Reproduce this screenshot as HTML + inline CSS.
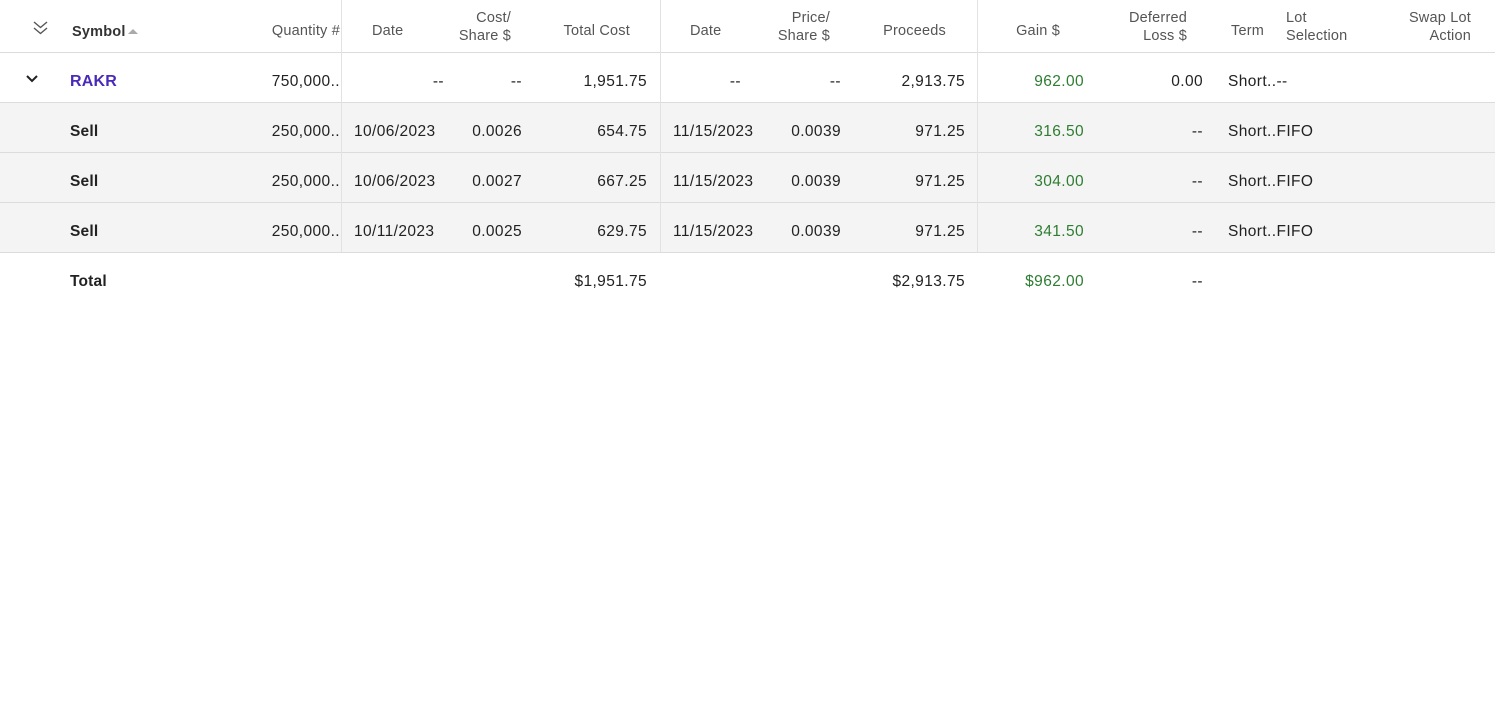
<!DOCTYPE html>
<html><head><style>
body{margin:0;width:1510px;height:720px;background:#fff;font-family:"Liberation Sans",Arial,sans-serif;position:relative;overflow:hidden}
.t{position:absolute;font-size:15.5px;line-height:18px;white-space:nowrap;color:#222;margin-top:2px;letter-spacing:0.4px}
.r{text-align:right}
.h{color:#555;font-size:14.5px;letter-spacing:0.2px;margin-top:1px}
.b{font-weight:bold;letter-spacing:0.2px}
.g{color:#2e7d32}
.line{position:absolute;left:0;width:1495px;height:1px;background:#dcdcdc}
.v{position:absolute;top:0;width:1px;height:252px;background:#e2e2e2}
.bg{position:absolute;left:0;width:1495px;top:103px;height:149px;background:#f4f4f4}
</style></head><body>
<div class="bg"></div>
<div class="line" style="top:52px"></div>
<div class="line" style="top:102px"></div>
<div class="line" style="top:152px"></div>
<div class="line" style="top:202px"></div>
<div class="line" style="top:252px"></div>
<div class="v" style="left:341px"></div>
<div class="v" style="left:660px"></div>
<div class="v" style="left:977px"></div>

<svg style="position:absolute;left:32px;top:20px" width="17" height="16" viewBox="0 0 17 16"><path d="M2 2l6.5 5.5L15 2M2 8l6.5 5.5L15 8" fill="none" stroke="#555" stroke-width="1.4"/></svg>
<div class="t b" style="left:72px;top:21px;color:#333;font-size:14.5px">Symbol<span style="display:inline-block;width:0;height:0;border-left:5px solid transparent;border-right:5px solid transparent;border-bottom:5px solid #aaa;margin-left:2px;vertical-align:2px"></span></div>
<div class="t h r" style="right:1170px;top:21px">Quantity #</div>
<div class="t h" style="left:372px;top:21px">Date</div>
<div class="t h r" style="right:999px;top:8px;line-height:18px">Cost/<br>Share $</div>
<div class="t h r" style="right:880px;top:21px">Total Cost</div>
<div class="t h" style="left:690px;top:21px">Date</div>
<div class="t h r" style="right:680px;top:8px">Price/<br>Share $</div>
<div class="t h r" style="right:564px;top:21px">Proceeds</div>
<div class="t h r" style="right:450px;top:21px">Gain $</div>
<div class="t h r" style="right:323px;top:8px">Deferred<br>Loss $</div>
<div class="t h" style="left:1231px;top:21px">Term</div>
<div class="t h" style="left:1286px;top:8px">Lot<br>Selection</div>
<div class="t h r" style="right:39px;top:8px">Swap Lot<br>Action</div>

<svg style="position:absolute;left:25px;top:74px" width="14" height="10" viewBox="0 0 14 10"><path d="M2 2l5 5 5-5" fill="none" stroke="#222" stroke-width="2"/></svg>
<div class="t b" style="left:70px;top:71px;color:#4a2ab8;font-size:16px">RAKR</div>
<div class="t r" style="right:1170px;top:71px">750,000..</div>
<div class="t r" style="right:1066px;top:71px">--</div>
<div class="t r" style="right:988px;top:71px">--</div>
<div class="t r" style="right:863px;top:71px">1,951.75</div>
<div class="t r" style="right:769px;top:71px">--</div>
<div class="t r" style="right:669px;top:71px">--</div>
<div class="t r" style="right:545px;top:71px">2,913.75</div>
<div class="t r g" style="right:426px;top:71px">962.00</div>
<div class="t r" style="right:307px;top:71px">0.00</div>
<div class="t" style="left:1228px;top:71px">Short..--</div>

<div class="t b" style="left:70px;top:121px">Sell</div>
<div class="t r" style="right:1170px;top:121px">250,000..</div>
<div class="t" style="left:354px;top:121px">10/06/2023</div>
<div class="t r" style="right:988px;top:121px">0.0026</div>
<div class="t r" style="right:863px;top:121px">654.75</div>
<div class="t" style="left:673px;top:121px">11/15/2023</div>
<div class="t r" style="right:669px;top:121px">0.0039</div>
<div class="t r" style="right:545px;top:121px">971.25</div>
<div class="t r g" style="right:426px;top:121px">316.50</div>
<div class="t r" style="right:307px;top:121px">--</div>
<div class="t" style="left:1228px;top:121px">Short..FIFO</div>

<div class="t b" style="left:70px;top:171px">Sell</div>
<div class="t r" style="right:1170px;top:171px">250,000..</div>
<div class="t" style="left:354px;top:171px">10/06/2023</div>
<div class="t r" style="right:988px;top:171px">0.0027</div>
<div class="t r" style="right:863px;top:171px">667.25</div>
<div class="t" style="left:673px;top:171px">11/15/2023</div>
<div class="t r" style="right:669px;top:171px">0.0039</div>
<div class="t r" style="right:545px;top:171px">971.25</div>
<div class="t r g" style="right:426px;top:171px">304.00</div>
<div class="t r" style="right:307px;top:171px">--</div>
<div class="t" style="left:1228px;top:171px">Short..FIFO</div>

<div class="t b" style="left:70px;top:221px">Sell</div>
<div class="t r" style="right:1170px;top:221px">250,000..</div>
<div class="t" style="left:354px;top:221px">10/11/2023</div>
<div class="t r" style="right:988px;top:221px">0.0025</div>
<div class="t r" style="right:863px;top:221px">629.75</div>
<div class="t" style="left:673px;top:221px">11/15/2023</div>
<div class="t r" style="right:669px;top:221px">0.0039</div>
<div class="t r" style="right:545px;top:221px">971.25</div>
<div class="t r g" style="right:426px;top:221px">341.50</div>
<div class="t r" style="right:307px;top:221px">--</div>
<div class="t" style="left:1228px;top:221px">Short..FIFO</div>

<div class="t b" style="left:70px;top:271px">Total</div>
<div class="t r" style="right:863px;top:271px">$1,951.75</div>
<div class="t r" style="right:545px;top:271px">$2,913.75</div>
<div class="t r g" style="right:426px;top:271px">$962.00</div>
<div class="t r" style="right:307px;top:271px">--</div>
</body></html>
